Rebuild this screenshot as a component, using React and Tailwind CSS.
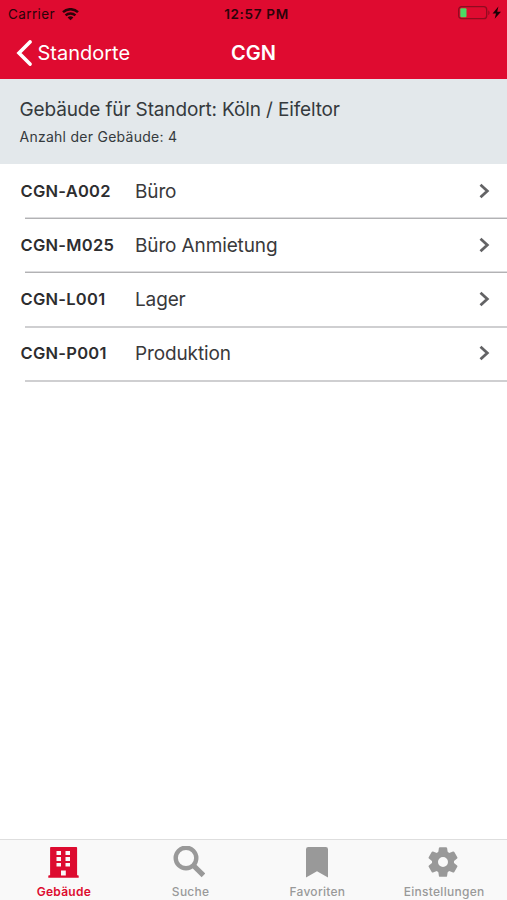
import React from 'react'

const BUILDINGS = [
  { code: 'CGN-A002', name: 'Büro', row: 'h-[54px] pb-px border-b border-b-[#b2b2b4] shadow-[inset_0_-1px_0_#dcdcde]' },
  { code: 'CGN-M025', name: 'Büro Anmietung', row: 'h-[54px] pb-px border-b border-b-[#b2b2b4] shadow-[inset_0_-1px_0_#dcdcde]' },
  { code: 'CGN-L001', name: 'Lager', row: 'h-[55px] pb-px border-b-2 border-b-[#cfcfd1]' },
  { code: 'CGN-P001', name: 'Produktion', row: 'h-[54px] pb-0.5 border-b-2 border-b-[#cfcfd1]' },
]

function WifiIcon() {
  return (
    <svg className="ml-[7px] h-[13px] w-[17px]" viewBox="0 0 17 13" fill="none" stroke="currentColor" strokeWidth="2.5">
      <path d="M1 4.2C5.2 0.2 11.8 0.2 16 4.2" />
      <path d="M3.6 7.3C6.3 4.8 10.7 4.8 13.4 7.3" />
      <path d="M8.5 12.2L5.6 9.4C7.3 8 9.7 8 11.4 9.4Z" fill="currentColor" stroke="none" />
    </svg>
  )
}

function BatteryIcon() {
  return (
    <svg className="-mt-px h-[14px] w-[44px]" viewBox="0 0 44 14">
      <rect x="0.7" y="0.7" width="28" height="12" rx="3" fill="none" stroke="#8f0c20" strokeWidth="1.3" />
      <rect x="2.3" y="2.2" width="6.2" height="9" rx="1" fill="#4cd964" />
      <path d="M30.3 4.4c1.6.5 1.6 4.1 0 4.6z" fill="#8f0c20" />
      <path d="M40.4 0.5L34.6 7.5h3.4l-1.3 5.3L43 5.7h-3.8z" fill="#1b0205" />
    </svg>
  )
}

function BuildingIcon() {
  return (
    <svg className="-ml-0.5 h-8 w-8" viewBox="0 0 32 32">
      <path
        fill="currentColor"
        fillRule="evenodd"
        d="M3.9 1h25.4q.8 0 .8.8V29.3h.8q.8 0 .8.8V31.7H1.3V30.1q0-.8.8-.8h1V1.8q0-.8.8-.8zM9.5 5H14v4H9.500zM18.500 5H23v4h-4.500zM9.500 11H14v4H9.500zM18.500 11H23v4h-4.500zM9.500 17H14v3.600H9.500zM18.500 17H23v3.600h-4.500zM14 24.400h4.800v5H14z"
      />
    </svg>
  )
}

function SearchIcon() {
  return (
    <svg className="-ml-1 h-8 w-8" viewBox="0 0 32 32" fill="none" stroke="currentColor">
      <circle cx="13" cy="12" r="10.300" strokeWidth="4.400" />
      <path d="M21 20L28.600 27.500" strokeWidth="5.200" strokeLinecap="square" />
    </svg>
  )
}

function BookmarkIcon() {
  return (
    <svg className="h-8 w-8" viewBox="0 0 32 32" fill="currentColor">
      <path d="M7.200 1h17.600q2.200 0 2.200 2.200V31.500L16 25.300 5 31.500V3.200Q5 1 7.200 1z" />
    </svg>
  )
}

function GearIcon() {
  return (
    <svg className="-ml-[3px] h-8 w-8" viewBox="0 0 32 32" fill="currentColor">
      <circle cx="16" cy="16" r="8" fill="none" stroke="currentColor" strokeWidth="6" />
      {[0, 60, 120, 180, 240, 300].map((angle) => (
        <path key={angle} transform={`rotate(${angle} 16 16)`} d="M13 1.200h6q.9 0 1.100.9l.8 5.400-1.900 2.700h-6l-1.900-2.700.8-5.400q.2-.9 1.100-.9z" />
      ))}
    </svg>
  )
}

const TABS = [
  { label: 'Gebäude', icon: BuildingIcon, className: 'text-[#dd0b2f]', text: 'font-semibold' },
  { label: 'Suche', icon: SearchIcon, className: 'text-[#999999]', text: 'font-medium' },
  { label: 'Favoriten', icon: BookmarkIcon, className: 'text-[#999999]', text: 'font-medium' },
  { label: 'Einstellungen', icon: GearIcon, className: 'text-[#999999]', text: 'font-medium' },
]

function Header() {
  return (
    <header className="h-[79px] bg-[#df0b30]">
      <div className="grid h-[27px] grid-cols-3 items-center pl-2 pr-[5px] text-[#2b0309]">
        <div className="flex items-center pt-px text-[13.5px] tracking-[0.38px]">
          Carrier
          <WifiIcon />
        </div>
        <p className="pl-[3px] pt-px text-center text-[13.5px] font-semibold tracking-[0.68px]">12:57 PM</p>
        <div className="flex justify-end">
          <BatteryIcon />
        </div>
      </div>
      <div className="grid h-[52px] grid-cols-3 items-center text-xl text-white">
        <div className="flex items-center pl-4">
          <svg className="mr-[5.5px] h-[26px] w-4" viewBox="0 0 16 26" fill="none" stroke="currentColor" strokeWidth="3.6">
            <path d="M14 1.9L3 13l11 11.1" strokeLinecap="round" />
          </svg>
          <span>Standorte</span>
        </div>
        <h1 className="text-center font-semibold">CGN</h1>
      </div>
    </header>
  )
}

function BuildingRow({ code, name, row }) {
  return (
    <li className={`ml-[25px] flex items-center ${row}`}>
      <span className="-ml-[4.5px] w-[114.5px] text-[16.5px] font-semibold tracking-[0.26px] text-[#2d2d2f]">{code}</span>
      <span className="flex-1 pt-0.5 text-[19px] tracking-[-0.13px] text-[#39393b]">{name}</span>
      <svg className="mr-[17px] h-4 w-[11px]" viewBox="0 0 11 16" fill="none" stroke="#636365" strokeWidth="2.8">
        <path d="M1.5 1.8L8.3 8l-6.8 6.2" />
      </svg>
    </li>
  )
}

export default function App() {
  return (
    <div className="flex h-[900px] w-[507px] flex-col overflow-hidden bg-white font-['Inter',sans-serif]">
      <Header />
      <section className="h-[85px] bg-[#e3e8eb] px-[19.5px] pt-[17px] text-[#353a3d]">
        <h2 className="text-[19px] leading-7 tracking-[-0.14px]">Gebäude für Standort: Köln / Eifeltor</h2>
        <p className="mt-px text-sm leading-6 tracking-[0.26px]">Anzahl der Gebäude: 4</p>
      </section>
      <ul className="flex-1 pt-px">
        {BUILDINGS.map((b) => (
          <BuildingRow key={b.code} {...b} />
        ))}
      </ul>
      <nav className="grid h-[61px] grid-cols-4 border-t border-[#dedede] bg-[#f9f9f9]">
        {TABS.map(({ label, icon: Icon, className, text }) => (
          <div key={label} className={`flex flex-col items-center pl-px pt-1.5 ${className}`}>
            <Icon />
            <span className={`mt-1.5 text-xs leading-4 tracking-[0.27px] ${text}`}>{label}</span>
          </div>
        ))}
      </nav>
    </div>
  )
}
